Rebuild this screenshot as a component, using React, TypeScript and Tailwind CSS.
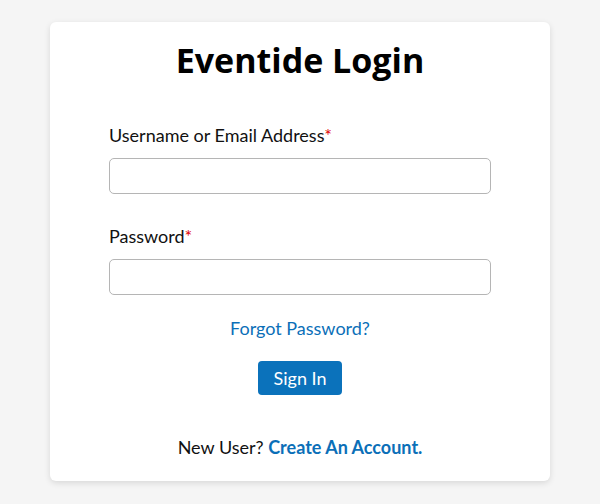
import React from "react";

export default function App() {
  return (
    <div className="min-h-[504px] w-full bg-[#f5f5f5] pt-[22px]" style={{ fontFamily: "Lato, 'Liberation Sans', sans-serif" }}>
      <div className="ml-[50px] flex w-[500px] flex-col rounded-[6px] bg-white px-[59px] pt-[18px] pb-[22px] shadow-[0_2px_6px_rgba(0,0,0,0.12)]">
        <h1 className="text-center text-[34px] leading-[40px] font-bold text-black" style={{ fontFamily: "'Open Sans', sans-serif" }}>
          Eventide Login
        </h1>
        <label className="mt-[43px] text-[18px] leading-[24px] text-[#111]">
          Username or Email Address<span className="text-[#e00000]">*</span>
        </label>
        <input type="text" className="mt-[11px] h-[36px] w-[382px] rounded-[5px] border border-[#b5b5b5] bg-white" />
        <label className="mt-[30px] text-[18px] leading-[24px] text-[#111]">
          Password<span className="text-[#e00000]">*</span>
        </label>
        <input type="password" className="mt-[11px] h-[36px] w-[382px] rounded-[5px] border border-[#b5b5b5] bg-white" />
        <div className="mt-[21px] text-center text-[18px] leading-[24px] text-[#0b6fb8]">Forgot Password?</div>
        <div className="mt-[21px] flex justify-center">
          <button className="flex h-[34px] w-[84px] items-center justify-center rounded-[4px] bg-[#0b72bb] text-[18px] text-white">
            Sign In
          </button>
        </div>
        <div className="mt-[40px] text-center text-[18px] leading-[24px] text-[#111]">
          New User? <span className="font-bold text-[#0b6fb8]">Create An Account.</span>
        </div>
      </div>
    </div>
  );
}
